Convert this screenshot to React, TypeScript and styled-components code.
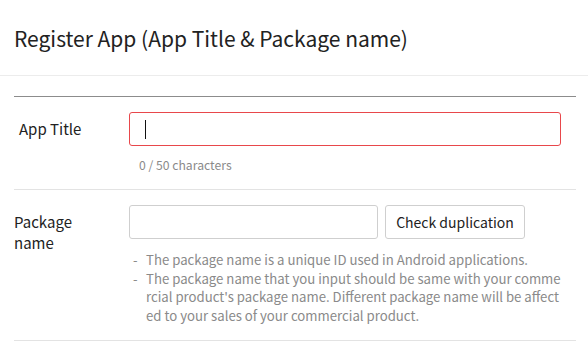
import styled, { createGlobalStyle } from "styled-components";

const GlobalStyle = createGlobalStyle`
  body {
    margin: 0;
    background: #fff;
    font-family: "Noto Sans CJK KR", "Noto Sans", sans-serif;
    color: #222;
  }
`;

const Header = styled.header`
  height: 75px;
  display: flex;
  align-items: center;
  padding-left: 14px;
  border-bottom: 1px solid #ececec;
`;

const Title = styled.h1`
  margin: 0;
  font-size: 21px;
  font-weight: 400;
  color: #222;
`;

const Form = styled.div`
  margin: 20px 12px 0 14px;
  border-top: 1px solid #8c8c8c;
`;

const Row = styled.div`
  display: grid;
  grid-template-columns: 115px 1fr;
  padding: 15px 15px 15px 0;
  border-bottom: 1px solid #e3e3e3;
`;

const Label = styled.label<{ $indent?: number }>`
  width: 90px;
  font-size: 15px;
  line-height: 21px;
  padding-left: ${(p) => p.$indent ?? 0}px;
  padding-top: 6px;
  color: #222;
`;

const Content = styled.div`
  display: flex;
  flex-direction: column;
`;

const Field = styled.div`
  position: relative;
  display: flex;
`;

const TextInput = styled.input<{ $error?: boolean }>`
  box-sizing: border-box;
  height: 34px;
  flex: 1;
  min-width: 0;
  border: 1px solid ${(p) => (p.$error ? "#e8474b" : "#cfcfcf")};
  border-radius: 3px;
  padding: 0 15px;
  font-family: inherit;
  font-size: 14px;
  outline: none;
`;

const Caret = styled.span`
  position: absolute;
  left: 16px;
  top: 8px;
  width: 1px;
  height: 19px;
  background: #111;
`;

const Counter = styled.div`
  margin-top: 11px;
  padding-left: 10px;
  font-size: 12.2px;
  color: #8a8a8a;
  line-height: 17px;
`;

const InlineGroup = styled.div`
  display: flex;
  gap: 7px;
`;

const ShortInput = styled(TextInput)`
  flex: 0 0 249px;
`;

const Button = styled.button`
  box-sizing: border-box;
  height: 34px;
  width: 140px;
  border: 1px solid #cfcfcf;
  border-radius: 3px;
  background: #fff;
  font-family: inherit;
  font-size: 14px;
  color: #222;
  padding: 0;
`;

const Notes = styled.ul`
  list-style: none;
  margin: 12px 0 0 4px;
  padding: 0;
  font-size: 13.2px;
  line-height: 18.6px;
  color: #8a8a8a;
  word-break: break-all;
`;

const Note = styled.li`
  position: relative;
  padding-left: 13px;
  &::before {
    content: "-";
    position: absolute;
    left: 0;
  }
`;

export default function App() {
  return (
    <>
      <GlobalStyle />
      <Header>
        <Title>Register App (App Title &amp; Package name)</Title>
      </Header>
      <Form>
        <Row>
          <Label $indent={5}>App Title</Label>
          <Content>
            <Field>
              <TextInput $error />
              <Caret />
            </Field>
            <Counter>0 / 50 characters</Counter>
          </Content>
        </Row>
        <Row>
          <Label>Package name</Label>
          <Content>
            <InlineGroup>
              <ShortInput />
              <Button>Check duplication</Button>
            </InlineGroup>
            <Notes>
              <Note>The package name is a unique ID used in Android applications.</Note>
              <Note>
                The package name that you input should be same with your commercial product's package
                name. Different package name will be affected to your sales of your commercial product.
              </Note>
            </Notes>
          </Content>
        </Row>
      </Form>
    </>
  );
}
